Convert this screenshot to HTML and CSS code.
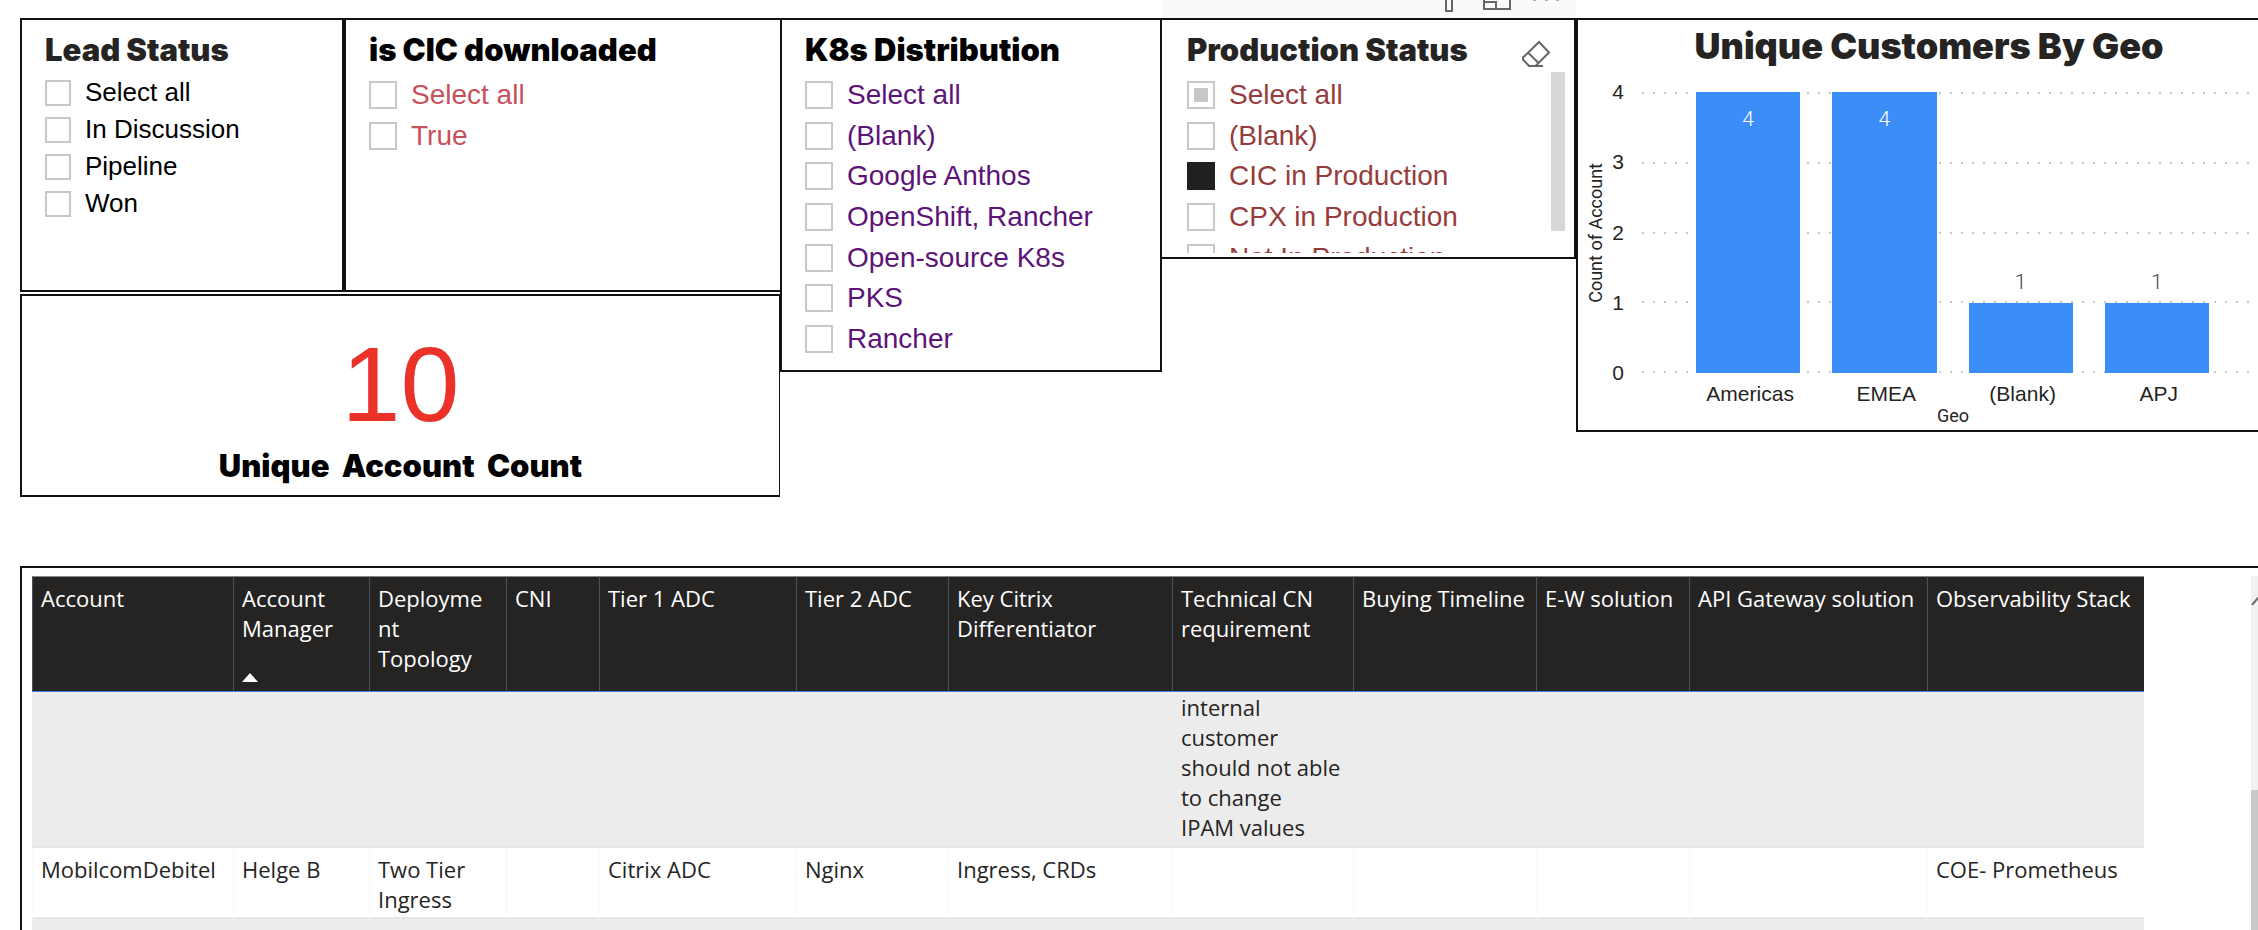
FILE: index.html
```html
<!DOCTYPE html>
<html lang="en">
<head>
<meta charset="utf-8">
<title>Customer Dashboard</title>
<link rel="stylesheet" href="styles.css">
</head>
<body>
<main class="page">
  <div class="top">
    <div class="left">
      <fieldset class="panel slicer slicer-lead">
        <div class="slicer-head"><h2>Lead Status</h2></div>
        <div class="options compact">
          <label><input type="checkbox">Select all</label>
          <label><input type="checkbox">In Discussion</label>
          <label><input type="checkbox">Pipeline</label>
          <label><input type="checkbox">Won</label>
        </div>
      </fieldset>
      <fieldset class="panel slicer slicer-cic">
        <div class="slicer-head"><h2>is CIC downloaded</h2></div>
        <div class="options">
          <label><input type="checkbox">Select all</label>
          <label><input type="checkbox">True</label>
        </div>
      </fieldset>
      <section class="panel card">
        <div class="card-value">10</div>
        <div class="card-label">Unique&nbsp; Account&nbsp; Count</div>
      </section>
    </div>

    <fieldset class="panel slicer slicer-k8s">
      <div class="slicer-head"><h2>K8s Distribution</h2></div>
      <div class="options">
        <label><input type="checkbox">Select all</label>
        <label><input type="checkbox">(Blank)</label>
        <label><input type="checkbox">Google Anthos</label>
        <label><input type="checkbox">OpenShift, Rancher</label>
        <label><input type="checkbox">Open-source K8s</label>
        <label><input type="checkbox">PKS</label>
        <label><input type="checkbox">Rancher</label>
      </div>
    </fieldset>

    <div class="production">
      <div class="toolbar">
        <button type="button" aria-label="Filters"><svg width="10" height="18" viewBox="0 0 10 18"><path d="M2 -2V11H8V-2" /></svg></button>
        <button type="button" aria-label="Focus mode"><svg width="30" height="18" viewBox="0 0 30 18"><path d="M2 -2V9H28V-2M2 2H14V9" /></svg></button>
        <button type="button" aria-label="More options"><svg width="28" height="18" viewBox="0 0 28 18"><path class="dots" d="M1 0H4M13 0H16M24 0H27" /></svg></button>
      </div>
      <fieldset class="panel slicer slicer-production">
        <div class="slicer-head">
          <h2>Production Status</h2>
          <button type="button" aria-label="Clear selections"><svg width="30" height="28" viewBox="0 0 30 28"><path d="M18 2L28 12.500L16 24.500L14.500 26H8L2 19.500V17.500ZM7.500 13L18 23.500M10 26H22" /></svg></button>
        </div>
        <div class="scroll-area">
          <div class="options">
            <label><input type="checkbox" class="partial">Select all</label>
            <label><input type="checkbox">(Blank)</label>
            <label><input type="checkbox" checked>CIC in Production</label>
            <label><input type="checkbox">CPX in Production</label>
            <label><input type="checkbox">Not In Production</label>
          </div>
          <div class="scroll-thumb"></div>
        </div>
      </fieldset>
    </div>

    <section class="panel chart">
      <h2>Unique Customers By Geo</h2>
      <div class="chart-body">
        <div class="y-title">Count of Account</div>
        <div class="y-axis"><span>4</span><span>3</span><span>2</span><span>1</span><span>0</span></div>
        <div class="plot">
          <div class="gridlines"><i></i><i></i><i></i><i></i><i></i></div>
          <div class="bars">
            <div class="bar" style="height:100%"><span>4</span></div>
            <div class="bar" style="height:100%"><span>4</span></div>
            <div class="bar low" style="height:25%"><span>1</span></div>
            <div class="bar low" style="height:25%"><span>1</span></div>
          </div>
        </div>
        <div class="x-axis"><span>Americas</span><span>EMEA</span><span>(Blank)</span><span>APJ</span></div>
        <div class="x-title">Geo</div>
      </div>
    </section>
  </div>

  <section class="table-panel">
    <div class="table-wrap">
      <table>
        <colgroup>
          <col class="c-account"><col class="c-manager"><col class="c-topology"><col class="c-cni"><col class="c-tier1"><col class="c-tier2"><col class="c-diff"><col class="c-tech"><col class="c-buying"><col class="c-ew"><col class="c-api"><col class="c-obs">
        </colgroup>
        <thead>
          <tr>
            <th>Account</th>
            <th>Account Manager<svg class="sort" width="16" height="9" viewBox="0 0 16 9"><path d="M8 0L16 9H0Z" /></svg></th>
            <th class="narrow">Deployment Topology</th>
            <th>CNI</th>
            <th>Tier 1 ADC</th>
            <th>Tier 2 ADC</th>
            <th>Key Citrix Differentiator</th>
            <th>Technical CN requirement</th>
            <th>Buying Timeline</th>
            <th>E-W solution</th>
            <th>API Gateway solution</th>
            <th>Observability Stack</th>
          </tr>
        </thead>
        <tbody>
          <tr class="scrolled"><td></td><td></td><td></td><td></td><td></td><td></td><td></td><td>internal customer should not able to change<br>IPAM values</td><td></td><td></td><td></td><td></td></tr>
          <tr><td>MobilcomDebitel</td><td>Helge B</td><td>Two Tier Ingress</td><td></td><td>Citrix ADC</td><td>Nginx</td><td>Ingress, CRDs</td><td></td><td></td><td></td><td></td><td>COE- Prometheus</td></tr>
          <tr><td>&nbsp;</td><td></td><td></td><td></td><td></td><td></td><td></td><td></td><td></td><td></td><td></td><td></td></tr>
        </tbody>
      </table>
    </div>
    <div class="v-scroll">
      <svg width="14" height="8" viewBox="0 0 14 8"><path d="M1 8L7 1L13 8" /></svg>
      <div class="v-thumb"></div>
    </div>
  </section>
</main>
</body>
</html>
```

FILE: styles.css
```css
* { box-sizing: border-box; }

html { overflow: hidden; }

body {
  margin: 0;
  background: #fff;
  color: #252423;
  font-family: "Liberation Sans", Arial, sans-serif;
}

.page {
  display: flex;
  flex-direction: column;
  height: 100vh;
  padding-left: 20px;
  overflow: hidden;
}

h2 {
  margin: 0;
  font-family: Inter, "Liberation Sans", sans-serif;
  font-size: 31px;
  font-weight: 900;
  line-height: 40px;
  white-space: nowrap;
}

button {
  margin: 0;
  padding: 0;
  border: 0;
  background: none;
}

svg { display: block; fill: none; stroke: #666; stroke-width: 2; }

.panel {
  min-width: 0;
  margin: 0;
  padding: 0;
  border: 2px solid #111;
  background: #fff;
}

/* Upper row */
.top {
  display: grid;
  grid-template-columns: minmax(0, 760fr) minmax(0, 382fr) minmax(0, 414fr) minmax(0, 682fr);
  align-items: start;
  flex: none;
  height: 566px;
}

.left {
  display: grid;
  grid-template-columns: minmax(0, 324fr) minmax(0, 436fr);
  grid-template-rows: 274px 203px;
  row-gap: 2px;
  margin-top: 18px;
}

.slicer { padding: 10px 23px 0; }
.slicer-head { display: flex; justify-content: space-between; }
.slicer-cic { border-right: 0; color: #000; }
.slicer-lead .options { color: #000; }
.slicer-cic .options { height: 81px; color: #c8505a; }
.slicer-k8s { height: 354px; margin-top: 18px; color: #000; }
.slicer-k8s .options { height: 284px; color: #5c1478; }

.options {
  display: grid;
  grid-auto-rows: 1fr;
  margin-top: 5px;
  font-size: 28px;
}
.options.compact { grid-auto-rows: 37px; margin-top: 4px; font-size: 26px; }
.options label { display: flex; align-items: center; gap: 14px; white-space: nowrap; }

input[type="checkbox"] {
  appearance: none;
  flex: none;
  width: 28px;
  height: 28px;
  margin: 0;
  border: 2px solid #c8c8c8;
  background: #fff;
}
.compact input[type="checkbox"] { width: 26px; height: 26px; }
input[type="checkbox"]:checked { border-color: #212121; background: #212121; }
input[type="checkbox"].partial { padding: 5px; background: #c8c8c8 content-box; }

.card {
  grid-column: 1 / -1;
  border-right-width: 1px;
  text-align: center;
}
.card-value { margin-top: 28px; color: #eb3229; font-size: 106px; line-height: 120px; }
.card-label {
  margin-top: 2px;
  color: #000;
  font-family: Inter, "Liberation Sans", sans-serif;
  font-size: 31px;
  font-weight: 900;
  line-height: 40px;
}

.toolbar {
  display: flex;
  justify-content: flex-end;
  gap: 20px;
  height: 18px;
  padding-right: 16px;
  background: #fafafa;
}
.toolbar button:first-child { margin-right: 8px; }
.toolbar .dots { stroke: #aaa; }

.slicer-production { height: 241px; padding-right: 9px; border-left: 0; padding-left: 25px; }
.slicer-production .slicer-head button { margin: 8px 14px 0 0; }
.slicer-production .slicer-head { height: 40px; }
.slicer-production .options { flex: 1; height: 203px; color: #963c3c; }
.scroll-area { display: flex; height: 183px; overflow: hidden; }
.scroll-thumb { width: 14px; height: 159px; margin-top: 2px; background: #d8d7d6; }

/* Bar chart */
.chart { height: 414px; margin-top: 18px; border-right: 0; padding-top: 4px; }
.chart h2 { padding-left: 22px; font-size: 36px; line-height: 44px; text-align: center; }

.chart-body {
  display: grid;
  grid-template-columns: 28px 18px minmax(0, 1fr);
  grid-template-rows: 281px auto auto;
  padding-top: 24px;
}
.y-title {
  justify-self: end;
  align-self: center;
  font: 18px/20px Roboto, sans-serif;
  writing-mode: vertical-rl;
  rotate: 180deg;
}
.y-axis {
  display: flex;
  flex-direction: column;
  justify-content: space-between;
  margin: -12px 0;
  font-size: 21px;
  line-height: 24px;
  text-align: right;
}
.plot { display: grid; margin-left: 18px; }
.gridlines, .bars { grid-area: 1 / 1; }
.gridlines { display: flex; flex-direction: column; justify-content: space-between; }
.gridlines i {
  height: 2px;
  background: repeating-linear-gradient(to right, #c8c8c8 0 2px, transparent 2px 11px);
}
.bars, .x-axis {
  display: grid;
  grid-template-columns: repeat(4, minmax(0, 1fr));
  gap: 32px;
  padding: 0 49px 0 54px;
}
.bars { align-items: end; }
.bar {
  display: flex;
  justify-content: center;
  background: #3b8df7;
  color: #fff;
  font: 300 21px/24px Roboto, sans-serif;
}
.bar span { margin-top: 15px; }
.bar.low { color: #444; }
.bar.low span { margin-top: -33px; }
.x-axis {
  grid-column: 3;
  margin-left: 18px;
  padding: 9px 47px 0 56px;
  font-size: 21px;
  line-height: 24px;
  text-align: center;
}
.x-axis span { justify-self: center; }
.x-title {
  grid-column: 3;
  margin-left: 24px;
  font: 18px/20px Roboto, sans-serif;
  text-align: center;
}

/* Account table */
.table-panel {
  display: flex;
  flex: 1;
  justify-content: space-between;
  min-height: 0;
  padding: 8px 0 0 10px;
  border-top: 2px solid #111;
  border-left: 2px solid #111;
  overflow: hidden;
}
.table-wrap { flex: 0 1 2112px; }

table {
  width: 100%;
  border-collapse: separate;
  border-spacing: 0;
  table-layout: fixed;
  font-family: "Open Sans", "Noto Sans", sans-serif;
  font-size: 22px;
  line-height: 30px;
}
.c-account { width: 201px; }
.c-manager { width: 136px; }
.c-topology { width: 137px; }
.c-cni { width: 93px; }
.c-tier1 { width: 197px; }
.c-tier2 { width: 152px; }
.c-diff { width: 224px; }
.c-tech { width: 181px; }
.c-buying { width: 183px; }
.c-ew { width: 153px; }
.c-api { width: 238px; }
.c-obs { width: 217px; }

th, td {
  padding: 6px 8px 3px;
  text-align: left;
  vertical-align: top;
}
th {
  height: 116px;
  border-top: 1px solid #888;
  border-bottom: 1px solid #3f7fe0;
  border-left: 1px solid #465366;
  background: #252423;
  color: #fff;
  font-weight: 400;
  overflow-wrap: anywhere;
}
.narrow { padding-right: 14px; }
.sort { margin-top: 30px; fill: #fff; stroke: none; }
td {
  height: 71px;
  border-bottom: 2px solid #e6e6e6;
  border-left: 1px solid #f8f8f8;
}
tbody tr:nth-child(odd) td { border-left-color: #eee; background: #ececec; }
tbody .scrolled td { height: 156px; padding-top: 0; line-height: 30px; }

.v-scroll {
  display: flex;
  flex-direction: column;
  gap: 185px;
  width: 7px;
  padding-top: 21px;
  background: #f1f1f1;
  overflow: hidden;
}
.v-thumb { flex: 1; background: #c8c8c8; }
```
